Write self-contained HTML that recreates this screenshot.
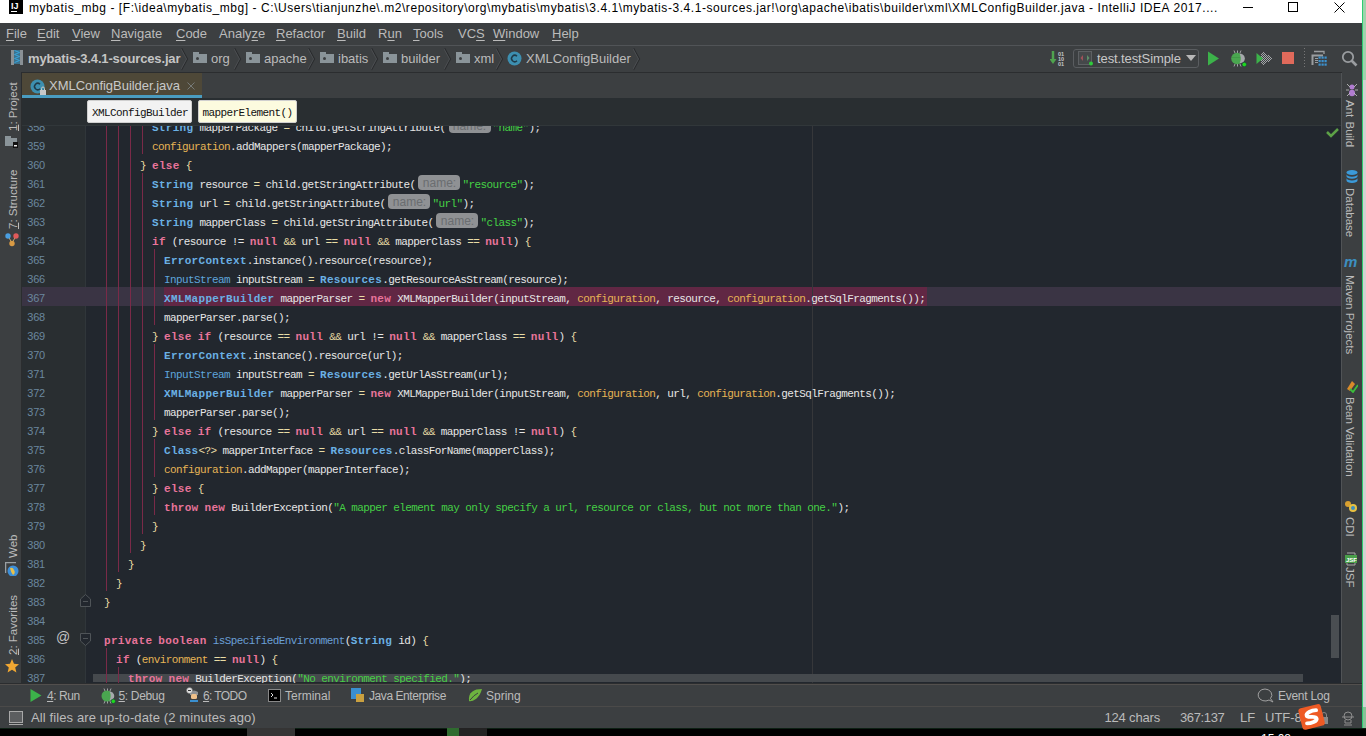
<!DOCTYPE html>
<html><head><meta charset="utf-8">
<style>
*{margin:0;padding:0;box-sizing:border-box}
html,body{width:1366px;height:736px;overflow:hidden;background:#22272e;font-family:"Liberation Sans",sans-serif}
.a{position:absolute}
#title{left:0;top:0;width:1362px;height:23px;background:#fff}
#title .t{position:absolute;left:29px;top:0px;font-size:12px;letter-spacing:0.56px;color:#000;white-space:nowrap;line-height:16px}
#menubar{left:0;top:23px;width:1362px;height:22px;background:#3c3f41}
.mi{position:absolute;top:3px;font-size:13px;color:#bbbbbb;line-height:16px;white-space:nowrap}
.mi u{text-decoration:underline;text-underline-offset:2px}
#sep1{left:0;top:45px;width:1362px;height:1px;background:#515457}
#navbar{left:0;top:46px;width:1362px;height:26px;background:#3c3f41}
#navline{left:0;top:72px;width:1362px;height:1px;background:#2b2d2f}
.nt{position:absolute;top:5px;font-size:13px;color:#bbbbbb;line-height:16px;white-space:nowrap}
#lstrip{left:0;top:72px;width:21px;height:611px;background:#3c3f41}
#lstripb{left:21px;top:72px;width:1px;height:611px;background:#2b2d2f}
#rstrip{left:1342px;top:72px;width:20px;height:611px;background:#3c3f41}
#rstripb{left:1341px;top:73px;width:1px;height:610px;background:#505356}
#tabbar{left:22px;top:73px;width:1319px;height:25px;background:#3c3f41}
#tab{left:22px;top:73px;width:180px;height:22px;background:#4e4838}
#tabul{left:22px;top:95px;width:180px;height:3px;background:#4a9cc0}
#header{left:22px;top:98px;width:1319px;height:28px;background:#292e31}
#headerline{left:22px;top:125px;width:1319px;height:1px;background:#31373a}
#gutter{left:22px;top:125px;width:64px;height:558px;background:#292e31}
#gutterline{left:85px;top:125px;width:1px;height:558px;background:#30363a}
#editor{left:86px;top:125px;width:1255px;height:558px;background:#22272e;overflow:hidden}
#curline{left:22px;top:287px;width:1319px;height:19px;background:#3a3444}
#sel{left:164px;top:287px;width:763px;height:19px;background:#612744}
#margin{left:812px;top:125px;width:1px;height:558px;background:#36373a}
.num{position:absolute;left:22px;width:23px;text-align:right;font-size:11px;line-height:19px;padding-top:2px;color:#6b879e;letter-spacing:-0.2px}
.g{position:absolute;width:1px;background:#7a2a48}
.ln{position:absolute;white-space:pre;padding-top:3px;font-family:"Liberation Mono",monospace;font-size:11px;line-height:19px;height:22px;color:#d6d6d6;letter-spacing:-0.6px}
.ln .k{color:#e8749a;font-weight:bold;letter-spacing:0.3px}
.ln .c{color:#6ab0e4;font-weight:bold;letter-spacing:0.3px}
.ln .C{color:#5ea5dc}
.ln .i{color:#e6e6e6}
.ln .f{color:#e6b455}
.ln .s{color:#45d045}
.ln .o{color:#e9dca5}
.ln .m{color:#6a9fd6}
.ln .h{display:inline-block;width:42px;height:15px;margin:0 2px 0 3px;vertical-align:baseline;position:relative;top:-1px;background:#8f9194;border-radius:4px;color:#6a6d70;font-family:"Liberation Sans",sans-serif;font-size:12px;line-height:17px;text-align:center;letter-spacing:0}
#hscroll{left:93px;top:674px;width:1210px;height:8px;background:#45494d}
#vscroll{left:1331px;top:615px;width:8px;height:43px;background:#4a4e52}
#edbottom{left:0;top:683px;width:1362px;height:2px;background:#524f4d;border-top:1px solid #2b2d2f}
#toolbar{left:0;top:685px;width:1362px;height:21px;background:#3c3f41}
#sep2{left:0;top:706px;width:1362px;height:1px;background:#4b4a49}
#status{left:0;top:707px;width:1362px;height:21px;background:#3c3f41}
#taskbar{left:0;top:728px;width:1366px;height:8px;background:#000;border-top:1px solid #0d2014}
.tb{position:absolute;font-size:12px;color:#bbbbbb;line-height:16px;white-space:nowrap}
.vt{position:absolute;transform-origin:0 0;transform:rotate(-90deg);font-size:11.5px;color:#bbbbbb;white-space:nowrap;line-height:14px}
.vtr{position:absolute;transform-origin:0 0;transform:rotate(90deg);font-size:11.5px;color:#bbbbbb;white-space:nowrap;line-height:14px}
#redge{left:1362px;top:0;width:4px;height:728px;background:#d2d2d2}
#redgeline{left:1362px;top:0;width:1px;height:728px;background:#2ecc71}
.pop{position:absolute;height:23px;border-radius:2px;border:1px solid #cfcfcf;padding-top:1.5px;font-family:"Liberation Mono",monospace;font-size:11px;letter-spacing:-0.6px;line-height:21px;color:#111;padding-left:4px;white-space:nowrap}
</style></head><body>
<div id="title" class="a">
  <div class="a" style="left:9px;top:0;width:14px;height:14px;background:#000"></div>
  <div class="a" style="left:11px;top:2px;font:bold 9px 'Liberation Sans',sans-serif;color:#fff;line-height:9px">IJ</div>
  <div class="a" style="left:11px;top:11px;width:6px;height:1px;background:#fff"></div>
  <div class="t">mybatis_mbg - [F:\idea\mybatis_mbg] - C:\Users\tianjunzhe\.m2\repository\org\mybatis\mybatis\3.4.1\mybatis-3.4.1-sources.jar!\org\apache\ibatis\builder\xml\XMLConfigBuilder.java - IntelliJ IDEA 2017....</div>
  <div class="a" style="left:1243px;top:7px;width:10px;height:1px;background:#000"></div>
  <div class="a" style="left:1288px;top:2px;width:10px;height:10px;border:1px solid #000"></div>
  <svg class="a" style="left:1334px;top:2px" width="11" height="11"><path d="M0.5 0.5L10.5 10.5M10.5 0.5L0.5 10.5" stroke="#000" stroke-width="1"/></svg>
</div>
<div id="menubar" class="a"><div class="mi" style="left:6px"><u>F</u>ile</div>
<div class="mi" style="left:37px"><u>E</u>dit</div>
<div class="mi" style="left:72px"><u>V</u>iew</div>
<div class="mi" style="left:111px"><u>N</u>avigate</div>
<div class="mi" style="left:176px"><u>C</u>ode</div>
<div class="mi" style="left:219px">Analy<u>z</u>e</div>
<div class="mi" style="left:276px"><u>R</u>efactor</div>
<div class="mi" style="left:337px"><u>B</u>uild</div>
<div class="mi" style="left:378px">R<u>u</u>n</div>
<div class="mi" style="left:413px"><u>T</u>ools</div>
<div class="mi" style="left:458px">VC<u>S</u></div>
<div class="mi" style="left:493px"><u>W</u>indow</div>
<div class="mi" style="left:552px"><u>H</u>elp</div></div>
<div id="sep1" class="a"></div>
<div id="navbar" class="a">
  <svg class="a" style="left:11px;top:4px" width="12" height="15"><rect x="0" y="0" width="3" height="15" fill="#8a9196"/><rect x="9" y="0" width="3" height="15" fill="#8a9196"/><path d="M3 1h6M3 3h6M3 5h6M3 7h6M3 9h6M3 11h6M3 13h6" stroke="#3aa6dc" stroke-width="1"/><path d="M3.5 0.5L8.5 2.5L3.5 4.5L8.5 6.5L3.5 8.5L8.5 10.5L3.5 12.5" stroke="#3aa6dc" fill="none" stroke-width="1"/></svg>
  <div class="nt" style="left:28px;font-weight:bold;letter-spacing:-0.15px;color:#c5c5c5">mybatis-3.4.1-sources.jar</div>
  <svg class="a" style="left:181px;top:2px" width="9" height="23"><path d="M0.5 0L6.5 11L0.5 22" stroke="#2a2c2e" stroke-width="1.2" fill="none"/><path d="M-0.5 0L5.5 11L-0.5 22" stroke="#4b4e51" stroke-width="1" fill="none"/></svg>
<svg class="a" style="left:193px;top:6px" width="14" height="11"><path d="M0 0H6V2H14V11H0Z" fill="#8a9499"/><circle cx="4.5" cy="6.5" r="1.5" fill="#3c3f41"/></svg>
<div class="nt" style="left:211px">org</div>
<svg class="a" style="left:246px;top:6px" width="14" height="11"><path d="M0 0H6V2H14V11H0Z" fill="#8a9499"/><circle cx="4.5" cy="6.5" r="1.5" fill="#3c3f41"/></svg>
<div class="nt" style="left:264px">apache</div>
<svg class="a" style="left:320px;top:6px" width="14" height="11"><path d="M0 0H6V2H14V11H0Z" fill="#8a9499"/><circle cx="4.5" cy="6.5" r="1.5" fill="#3c3f41"/></svg>
<div class="nt" style="left:338px">ibatis</div>
<svg class="a" style="left:383px;top:6px" width="14" height="11"><path d="M0 0H6V2H14V11H0Z" fill="#8a9499"/><circle cx="4.5" cy="6.5" r="1.5" fill="#3c3f41"/></svg>
<div class="nt" style="left:401px">builder</div>
<svg class="a" style="left:456px;top:6px" width="14" height="11"><path d="M0 0H6V2H14V11H0Z" fill="#8a9499"/><circle cx="4.5" cy="6.5" r="1.5" fill="#3c3f41"/></svg>
<div class="nt" style="left:474px">xml</div>
<svg class="a" style="left:234px;top:2px" width="9" height="23"><path d="M0.5 0L6.5 11L0.5 22" stroke="#2a2c2e" stroke-width="1.2" fill="none"/><path d="M-0.5 0L5.5 11L-0.5 22" stroke="#4b4e51" stroke-width="1" fill="none"/></svg>
<svg class="a" style="left:307.5px;top:2px" width="9" height="23"><path d="M0.5 0L6.5 11L0.5 22" stroke="#2a2c2e" stroke-width="1.2" fill="none"/><path d="M-0.5 0L5.5 11L-0.5 22" stroke="#4b4e51" stroke-width="1" fill="none"/></svg>
<svg class="a" style="left:371px;top:2px" width="9" height="23"><path d="M0.5 0L6.5 11L0.5 22" stroke="#2a2c2e" stroke-width="1.2" fill="none"/><path d="M-0.5 0L5.5 11L-0.5 22" stroke="#4b4e51" stroke-width="1" fill="none"/></svg>
<svg class="a" style="left:443.5px;top:2px" width="9" height="23"><path d="M0.5 0L6.5 11L0.5 22" stroke="#2a2c2e" stroke-width="1.2" fill="none"/><path d="M-0.5 0L5.5 11L-0.5 22" stroke="#4b4e51" stroke-width="1" fill="none"/></svg>
<svg class="a" style="left:495.5px;top:2px" width="9" height="23"><path d="M0.5 0L6.5 11L0.5 22" stroke="#2a2c2e" stroke-width="1.2" fill="none"/><path d="M-0.5 0L5.5 11L-0.5 22" stroke="#4b4e51" stroke-width="1" fill="none"/></svg>
<svg class="a" style="left:632.5px;top:2px" width="9" height="23"><path d="M0.5 0L6.5 11L0.5 22" stroke="#2a2c2e" stroke-width="1.2" fill="none"/><path d="M-0.5 0L5.5 11L-0.5 22" stroke="#4b4e51" stroke-width="1" fill="none"/></svg>
<svg class="a" style="left:507px;top:5px" width="16" height="16"><circle cx="7.5" cy="7.5" r="7" fill="#3d8fb0"/><path d="M10 5.2A3.2 3.2 0 1 0 10 9.8" stroke="#1f3a48" stroke-width="1.5" fill="none"/></svg>
<div class="nt" style="left:526px">XMLConfigBuilder</div>
</div>
<div id="navline" class="a"></div>
<div id="lstrip" class="a"></div><div id="lstripb" class="a"></div>
<div id="rstrip" class="a"></div><div id="rstripb" class="a"></div>
<div id="tabbar" class="a"></div>
<div id="tab" class="a"></div>
<div id="tabul" class="a"></div>
<div id="gutter" class="a"></div>
<div id="gutterline" class="a"></div>
<div id="editor" class="a"></div>
<div id="curline" class="a"></div>
<div id="sel" class="a"></div>
<div id="margin" class="a"></div>
<div id="hscroll" class="a"></div>
<div class="num" style="top:116px">358</div>
<div class="num" style="top:135px">359</div>
<div class="num" style="top:154px">360</div>
<div class="num" style="top:173px">361</div>
<div class="num" style="top:192px">362</div>
<div class="num" style="top:211px">363</div>
<div class="num" style="top:230px">364</div>
<div class="num" style="top:249px">365</div>
<div class="num" style="top:268px">366</div>
<div class="num" style="top:287px">367</div>
<div class="num" style="top:306px">368</div>
<div class="num" style="top:325px">369</div>
<div class="num" style="top:344px">370</div>
<div class="num" style="top:363px">371</div>
<div class="num" style="top:382px">372</div>
<div class="num" style="top:401px">373</div>
<div class="num" style="top:420px">374</div>
<div class="num" style="top:439px">375</div>
<div class="num" style="top:458px">376</div>
<div class="num" style="top:477px">377</div>
<div class="num" style="top:496px">378</div>
<div class="num" style="top:515px">379</div>
<div class="num" style="top:534px">380</div>
<div class="num" style="top:553px">381</div>
<div class="num" style="top:572px">382</div>
<div class="num" style="top:591px">383</div>
<div class="num" style="top:610px">384</div>
<div class="num" style="top:629px">385</div>
<div class="num" style="top:648px">386</div>
<div class="num" style="top:667px">387</div>
<div class="g" style="left:106px;top:125px;height:466px"></div>
<div class="g" style="left:118px;top:125px;height:447px"></div>
<div class="g" style="left:130px;top:125px;height:428px"></div>
<div class="g" style="left:142px;top:125px;height:29px"></div>
<div class="g" style="left:142px;top:173px;height:361px"></div>
<div class="g" style="left:154px;top:249px;height:76px"></div>
<div class="g" style="left:154px;top:344px;height:76px"></div>
<div class="g" style="left:154px;top:439px;height:38px"></div>
<div class="g" style="left:154px;top:496px;height:19px"></div>
<div class="g" style="left:106px;top:648px;height:35px"></div>
<div class="g" style="left:118px;top:667px;height:16px"></div>
<div class="ln" style="left:152px;top:116px"><span class="c">String</span><span class="i"> mapperPackage </span><span class="o">=</span><span class="i"> child.getStringAttribute(</span><span class="h">name:</span><span class="s">&quot;name&quot;</span><span class="i">);</span></div>
<div class="ln" style="left:152px;top:135px"><span class="f">configuration</span><span class="i">.addMappers(mapperPackage);</span></div>
<div class="ln" style="left:140px;top:154px"><span class="o">}</span><span class="i"> </span><span class="k">else</span><span class="i"> </span><span class="o">{</span></div>
<div class="ln" style="left:152px;top:173px"><span class="c">String</span><span class="i"> resource </span><span class="o">=</span><span class="i"> child.getStringAttribute(</span><span class="h">name:</span><span class="s">&quot;resource&quot;</span><span class="i">);</span></div>
<div class="ln" style="left:152px;top:192px"><span class="c">String</span><span class="i"> url </span><span class="o">=</span><span class="i"> child.getStringAttribute(</span><span class="h">name:</span><span class="s">&quot;url&quot;</span><span class="i">);</span></div>
<div class="ln" style="left:152px;top:211px"><span class="c">String</span><span class="i"> mapperClass </span><span class="o">=</span><span class="i"> child.getStringAttribute(</span><span class="h">name:</span><span class="s">&quot;class&quot;</span><span class="i">);</span></div>
<div class="ln" style="left:152px;top:230px"><span class="k">if</span><span class="i"> (resource != </span><span class="k">null</span><span class="i"> </span><span class="o">&amp;&amp;</span><span class="i"> url </span><span class="o">==</span><span class="i"> </span><span class="k">null</span><span class="i"> </span><span class="o">&amp;&amp;</span><span class="i"> mapperClass </span><span class="o">==</span><span class="i"> </span><span class="k">null</span><span class="i">) </span><span class="o">{</span></div>
<div class="ln" style="left:164px;top:249px"><span class="c">ErrorContext</span><span class="i">.instance().resource(resource);</span></div>
<div class="ln" style="left:164px;top:268px"><span class="C">InputStream</span><span class="i"> inputStream </span><span class="o">=</span><span class="i"> </span><span class="c">Resources</span><span class="i">.getResourceAsStream(resource);</span></div>
<div class="ln" style="left:164px;top:287px"><span class="c">XMLMapperBuilder</span><span class="i"> mapperParser </span><span class="o">=</span><span class="i"> </span><span class="k">new</span><span class="i"> XMLMapperBuilder(inputStream, </span><span class="f">configuration</span><span class="i">, resource, </span><span class="f">configuration</span><span class="i">.getSqlFragments());</span></div>
<div class="ln" style="left:164px;top:306px"><span class="i">mapperParser.parse();</span></div>
<div class="ln" style="left:152px;top:325px"><span class="o">}</span><span class="i"> </span><span class="k">else</span><span class="i"> </span><span class="k">if</span><span class="i"> (resource </span><span class="o">==</span><span class="i"> </span><span class="k">null</span><span class="i"> </span><span class="o">&amp;&amp;</span><span class="i"> url != </span><span class="k">null</span><span class="i"> </span><span class="o">&amp;&amp;</span><span class="i"> mapperClass </span><span class="o">==</span><span class="i"> </span><span class="k">null</span><span class="i">) </span><span class="o">{</span></div>
<div class="ln" style="left:164px;top:344px"><span class="c">ErrorContext</span><span class="i">.instance().resource(url);</span></div>
<div class="ln" style="left:164px;top:363px"><span class="C">InputStream</span><span class="i"> inputStream </span><span class="o">=</span><span class="i"> </span><span class="c">Resources</span><span class="i">.getUrlAsStream(url);</span></div>
<div class="ln" style="left:164px;top:382px"><span class="c">XMLMapperBuilder</span><span class="i"> mapperParser </span><span class="o">=</span><span class="i"> </span><span class="k">new</span><span class="i"> XMLMapperBuilder(inputStream, </span><span class="f">configuration</span><span class="i">, url, </span><span class="f">configuration</span><span class="i">.getSqlFragments());</span></div>
<div class="ln" style="left:164px;top:401px"><span class="i">mapperParser.parse();</span></div>
<div class="ln" style="left:152px;top:420px"><span class="o">}</span><span class="i"> </span><span class="k">else</span><span class="i"> </span><span class="k">if</span><span class="i"> (resource </span><span class="o">==</span><span class="i"> </span><span class="k">null</span><span class="i"> </span><span class="o">&amp;&amp;</span><span class="i"> url </span><span class="o">==</span><span class="i"> </span><span class="k">null</span><span class="i"> </span><span class="o">&amp;&amp;</span><span class="i"> mapperClass != </span><span class="k">null</span><span class="i">) </span><span class="o">{</span></div>
<div class="ln" style="left:164px;top:439px"><span class="c">Class</span><span class="o">&lt;?&gt;</span><span class="i"> mapperInterface </span><span class="o">=</span><span class="i"> </span><span class="c">Resources</span><span class="i">.classForName(mapperClass);</span></div>
<div class="ln" style="left:164px;top:458px"><span class="f">configuration</span><span class="i">.addMapper(mapperInterface);</span></div>
<div class="ln" style="left:152px;top:477px"><span class="o">}</span><span class="i"> </span><span class="k">else</span><span class="i"> </span><span class="o">{</span></div>
<div class="ln" style="left:164px;top:496px"><span class="k">throw</span><span class="i"> </span><span class="k">new</span><span class="i"> BuilderException(</span><span class="s">&quot;A mapper element may only specify a url, resource or class, but not more than one.&quot;</span><span class="i">);</span></div>
<div class="ln" style="left:152px;top:515px"><span class="o">}</span></div>
<div class="ln" style="left:140px;top:534px"><span class="o">}</span></div>
<div class="ln" style="left:128px;top:553px"><span class="o">}</span></div>
<div class="ln" style="left:116px;top:572px"><span class="o">}</span></div>
<div class="ln" style="left:104px;top:591px"><span class="o">}</span></div>
<div class="ln" style="left:104px;top:629px"><span class="k">private</span><span class="i"> </span><span class="k">boolean</span><span class="i"> </span><span class="m">isSpecifiedEnvironment</span><span class="i">(</span><span class="c">String</span><span class="i"> id) </span><span class="o">{</span></div>
<div class="ln" style="left:116px;top:648px"><span class="k">if</span><span class="i"> (</span><span class="f">environment</span><span class="i"> </span><span class="o">==</span><span class="i"> </span><span class="k">null</span><span class="i">) </span><span class="o">{</span></div>
<div class="ln" style="left:128px;top:667px"><span class="k">throw</span><span class="i"> </span><span class="k">new</span><span class="i"> BuilderException(</span><span class="s">&quot;No environment specified.&quot;</span><span class="i">);</span></div>
<div id="header" class="a"></div>
<div id="headerline" class="a"></div>

<div class="pop" style="left:87px;top:100px;width:105px;background:#f2f2f2">XMLConfigBuilder</div>
<div class="pop" style="left:197.5px;top:100px;width:99.5px;background:#fcfbdf">mapperElement()</div>

<svg class="a" style="left:30px;top:79px" width="17" height="16"><circle cx="7.5" cy="7.5" r="7" fill="#3d8fb0"/><path d="M10 5.2A3.2 3.2 0 1 0 10 9.8" stroke="#1f3a48" stroke-width="1.5" fill="none"/><rect x="10" y="11" width="6" height="5" fill="#c8c8c8"/><path d="M11.5 11V9.5A1.5 1.5 0 0 1 14.5 9.5V11" stroke="#c8c8c8" fill="none"/></svg>
<div class="a" style="left:49px;top:78px;font-size:13px;line-height:16px;color:#c8c8c8;white-space:nowrap;letter-spacing:-0.03px">XMLConfigBuilder.java</div>
<svg class="a" style="left:187px;top:82px" width="8" height="8"><path d="M0.5 0.5L7.5 7.5M7.5 0.5L0.5 7.5" stroke="#7b8080" stroke-width="0.9"/></svg>

<svg class="a" style="left:1050px;top:51px" width="17" height="16"><path d="M3 0V9" stroke="#4fa34f" stroke-width="2.5"/><path d="M-0.5 8L3 13L6.5 8Z" fill="#4fa34f"/><text x="8" y="5" font-size="5.5" fill="#c8c8c8" font-family="Liberation Sans" font-weight="bold">01</text><text x="8" y="10" font-size="5.5" fill="#c8c8c8" font-family="Liberation Sans" font-weight="bold">10</text><text x="8" y="15" font-size="5.5" fill="#c8c8c8" font-family="Liberation Sans" font-weight="bold">01</text></svg>
<div class="a" style="left:1073px;top:49px;width:126px;height:19px;border:1px solid #5a5d60;border-radius:3px;background:#3c3f41"></div>
<svg class="a" style="left:1078px;top:51px" width="16" height="15"><rect x="0.5" y="0.5" width="13" height="13" fill="#45484a" stroke="#5d6063"/><path d="M5 4L2.5 7L5 10Z" fill="#a0525a"/><path d="M9 4L11.5 7L9 10Z" fill="#5e8e6a"/><circle cx="13" cy="12.5" r="2" fill="#2fcc3b"/></svg>
<div class="a" style="left:1097px;top:51px;font-size:13px;line-height:16px;color:#c8c8c8;white-space:nowrap;letter-spacing:-0.1px">test.testSimple</div>
<svg class="a" style="left:1186px;top:55px" width="10" height="6"><path d="M0 0H10L5 6Z" fill="#b8b8b8"/></svg>
<svg class="a" style="left:1207px;top:51px" width="13" height="15"><path d="M1 0.5L12 7.5L1 14.5Z" fill="#3cb24a"/></svg>
<svg class="a" style="left:1230px;top:50px" width="17" height="17"><path d="M4 0.5L5 3M7.5 0.5V3M11 0.5L10 3M4 16.5L5 14M7.5 16.5V14M11 16.5L10 14" stroke="#a0a3a6" stroke-width="1"/><ellipse cx="7" cy="8.5" rx="5.8" ry="5.8" fill="#4aa650"/><path d="M2 7.5H12" stroke="#3f9645" stroke-width="0.8"/><path d="M9.5 3.5A4.8 5 0 0 1 9.5 13.5Q12 8.5 9.5 3.5Z" fill="#a6a9ac"/><path d="M12 5A4 4 0 0 1 12 12" stroke="#a6a9ac" stroke-width="1.6" fill="none"/><circle cx="14.3" cy="14.5" r="2.3" fill="#1ed81e" stroke="#234" stroke-width="0.6"/></svg>
<svg class="a" style="left:1256px;top:51px" width="16" height="15"><rect x="7" y="1" width="1" height="1" fill="#a4a7aa"/><rect x="6" y="2" width="1" height="1" fill="#a4a7aa"/><rect x="8" y="2" width="1" height="1" fill="#a4a7aa"/><rect x="5" y="3" width="1" height="1" fill="#a4a7aa"/><rect x="7" y="3" width="1" height="1" fill="#a4a7aa"/><rect x="9" y="3" width="1" height="1" fill="#a4a7aa"/><rect x="6" y="4" width="1" height="1" fill="#a4a7aa"/><rect x="8" y="4" width="1" height="1" fill="#a4a7aa"/><rect x="10" y="4" width="1" height="1" fill="#a4a7aa"/><rect x="12" y="4" width="1" height="1" fill="#a4a7aa"/><rect x="5" y="5" width="1" height="1" fill="#a4a7aa"/><rect x="7" y="5" width="1" height="1" fill="#a4a7aa"/><rect x="9" y="5" width="1" height="1" fill="#a4a7aa"/><rect x="11" y="5" width="1" height="1" fill="#a4a7aa"/><rect x="13" y="5" width="1" height="1" fill="#a4a7aa"/><rect x="4" y="6" width="1" height="1" fill="#a4a7aa"/><rect x="6" y="6" width="1" height="1" fill="#a4a7aa"/><rect x="8" y="6" width="1" height="1" fill="#a4a7aa"/><rect x="10" y="6" width="1" height="1" fill="#a4a7aa"/><rect x="12" y="6" width="1" height="1" fill="#a4a7aa"/><rect x="14" y="6" width="1" height="1" fill="#a4a7aa"/><rect x="3" y="7" width="1" height="1" fill="#a4a7aa"/><rect x="5" y="7" width="1" height="1" fill="#a4a7aa"/><rect x="7" y="7" width="1" height="1" fill="#a4a7aa"/><rect x="9" y="7" width="1" height="1" fill="#a4a7aa"/><rect x="11" y="7" width="1" height="1" fill="#a4a7aa"/><rect x="13" y="7" width="1" height="1" fill="#a4a7aa"/><rect x="15" y="7" width="1" height="1" fill="#a4a7aa"/><rect x="4" y="8" width="1" height="1" fill="#a4a7aa"/><rect x="6" y="8" width="1" height="1" fill="#a4a7aa"/><rect x="8" y="8" width="1" height="1" fill="#a4a7aa"/><rect x="10" y="8" width="1" height="1" fill="#a4a7aa"/><rect x="12" y="8" width="1" height="1" fill="#a4a7aa"/><rect x="14" y="8" width="1" height="1" fill="#a4a7aa"/><rect x="5" y="9" width="1" height="1" fill="#a4a7aa"/><rect x="7" y="9" width="1" height="1" fill="#a4a7aa"/><rect x="9" y="9" width="1" height="1" fill="#a4a7aa"/><rect x="11" y="9" width="1" height="1" fill="#a4a7aa"/><rect x="13" y="9" width="1" height="1" fill="#a4a7aa"/><rect x="6" y="10" width="1" height="1" fill="#a4a7aa"/><rect x="8" y="10" width="1" height="1" fill="#a4a7aa"/><rect x="10" y="10" width="1" height="1" fill="#a4a7aa"/><rect x="12" y="10" width="1" height="1" fill="#a4a7aa"/><rect x="5" y="11" width="1" height="1" fill="#a4a7aa"/><rect x="7" y="11" width="1" height="1" fill="#a4a7aa"/><rect x="9" y="11" width="1" height="1" fill="#a4a7aa"/><rect x="6" y="12" width="1" height="1" fill="#a4a7aa"/><rect x="8" y="12" width="1" height="1" fill="#a4a7aa"/><rect x="7" y="13" width="1" height="1" fill="#a4a7aa"/><path d="M0.5 2L7 7.5L0.5 13Z" fill="#3cb24a"/></svg>
<div class="a" style="left:1282px;top:52px;width:12px;height:12px;background:#e06a5b"></div>
<svg class="a" style="left:1304px;top:48px" width="1" height="20"><path d="M0.5 0V20" stroke="#777" stroke-dasharray="1,2"/></svg>
<svg class="a" style="left:1311px;top:50px" width="17" height="17"><path d="M3 1.5H13V4" stroke="#9a9da0" stroke-width="1.3" fill="none"/><path d="M1.5 15V5.5H12" stroke="#9a9da0" stroke-width="2" fill="none"/><path d="M4 8.5H7M4 10.5H7M4 12.5H7" stroke="#9a9da0"/><rect x="7.5" y="6.5" width="2.2" height="2.2" fill="#3b92d0"/><rect x="10.5" y="6.5" width="2.2" height="2.2" fill="#3b92d0"/><rect x="13.5" y="6.5" width="2.2" height="2.2" fill="#3b92d0"/><rect x="7.5" y="10" width="2.2" height="2.2" fill="#3b92d0"/><rect x="10.5" y="10" width="2.2" height="2.2" fill="#3b92d0"/><rect x="13.5" y="10" width="2.2" height="2.2" fill="#3b92d0"/><rect x="7.5" y="13.5" width="2.2" height="2.2" fill="#3b92d0"/><rect x="10.5" y="13.5" width="2.2" height="2.2" fill="#3b92d0"/><rect x="13.5" y="13.5" width="2.2" height="2.2" fill="#3b92d0"/></svg>
<svg class="a" style="left:1341px;top:50px" width="17" height="17"><circle cx="7" cy="7" r="5.2" fill="none" stroke="#9a9da0" stroke-width="1.8"/><path d="M10.5 10.5L15.5 15.5" stroke="#9a9da0" stroke-width="2.6"/></svg>

<div class="a" style="left:56px;top:629px;font-size:14px;line-height:16px;color:#c4c4c4">@</div>
<svg class="a" style="left:80px;top:633px" width="11" height="13"><path d="M0.5 0.5H10.5V8L5.5 12.5L0.5 8Z" fill="#22272e" stroke="#4f5458"/><path d="M3 5.5H8" stroke="#4f5458"/></svg>
<svg class="a" style="left:80px;top:594px" width="11" height="13"><path d="M0.5 12.5H10.5V5L5.5 0.5L0.5 5Z" fill="#22272e" stroke="#4f5458"/><path d="M3 7.5H8" stroke="#4f5458"/></svg>
<svg class="a" style="left:1326px;top:127px" width="13" height="11"><path d="M1 5L5 9L12 2" stroke="#5da147" stroke-width="2.5" fill="none"/></svg>

<div id="vscroll" class="a"></div>
<div id="edbottom" class="a"></div>
<div id="toolbar" class="a"></div>
<div id="sep2" class="a"></div>
<div id="status" class="a"></div>
<div id="taskbar" class="a"></div>
<div id="redge" class="a"></div><div class="a" style="left:1363px;top:0;width:3px;height:80px;background:#9fd3ad"></div><div class="a" style="left:1363px;top:707px;width:3px;height:21px;background:#86c197"></div><div id="redgeline" class="a"></div>

<div class="vt" style="left:5.5px;top:131px"><u>1</u>: Project</div>
<svg class="a" style="left:5px;top:136px" width="13" height="12"><path d="M0 0H6V2H12V10H0Z" fill="#8a9499"/><rect x="8" y="6" width="5" height="6" fill="#111"/><rect x="9" y="9" width="3" height="1.5" fill="#eee"/></svg>
<div class="vt" style="left:5.5px;top:229px"><u>7</u>: Structure</div>
<svg class="a" style="left:5px;top:233px" width="14" height="14"><path d="M3 3L7 10L11 3" stroke="#c7a66a" fill="none"/><circle cx="3" cy="3" r="2.7" fill="#4a9ee0"/><circle cx="11" cy="3" r="2.7" fill="#e05a5a"/><circle cx="7" cy="10.5" r="2.7" fill="#d99a44"/></svg>
<div class="vt" style="left:5.5px;top:558px">Web</div>
<svg class="a" style="left:5px;top:562px" width="14" height="14"><path d="M0.5 11V0.5H11" stroke="#9aa0a4" fill="none" stroke-width="1.5"/><circle cx="8" cy="9" r="5.5" fill="#3d8fd8"/><path d="M5 6Q8 5 9 8Q11 11 8 13Q6 11 5 6Z" fill="#e8c04a"/></svg>
<div class="vt" style="left:5.5px;top:655px"><u>2</u>: Favorites</div>
<svg class="a" style="left:4.5px;top:659px" width="14" height="14"><path d="M7 0L9 4.8L14 5.2L10.2 8.5L11.4 13.5L7 10.8L2.6 13.5L3.8 8.5L0 5.2L5 4.8Z" fill="#f0a732"/></svg>

<svg class="a" style="left:1346px;top:83px" width="12" height="14"><ellipse cx="6" cy="4" rx="2.5" ry="2.5" fill="#b07cd0"/><ellipse cx="6" cy="10" rx="3" ry="3.3" fill="#b07cd0"/><path d="M1 1L4 4M11 1L8 4M0 7H3M9 7H12M1 13L4 10M11 13L8 10" stroke="#c8c8c8" stroke-width="0.8"/></svg>
<div class="vtr" style="left:1357px;top:99.5px;word-spacing:1px">Ant Build</div>
<svg class="a" style="left:1346px;top:170px" width="12" height="13"><ellipse cx="6" cy="2.5" rx="5.5" ry="2.5" fill="#3b9ad9"/><path d="M0.5 4.2V6.2A5.5 2.5 0 0 0 11.5 6.2V4.2A5.5 2.5 0 0 1 0.5 4.2Z" fill="#3b9ad9"/><path d="M0.5 8V10.5A5.5 2.5 0 0 0 11.5 10.5V8A5.5 2.5 0 0 1 0.5 8Z" fill="#3b9ad9"/></svg>
<div class="vtr" style="left:1357px;top:188px">Database</div>
<div class="a" style="left:1344px;top:254px;font:italic bold 15px 'Liberation Sans',sans-serif;color:#3d8fc0;line-height:16px">m</div>
<div class="vtr" style="left:1357px;top:275px">Maven Projects</div>
<svg class="a" style="left:1345px;top:380px" width="13" height="13"><path d="M2 9L7 1L10 4L5 11Z" fill="#d98a2a"/><path d="M5 9L8 12L13 5" stroke="#3cbf3c" stroke-width="1.8" fill="none"/></svg>
<div class="vtr" style="left:1357px;top:397px">Bean Validation</div>
<svg class="a" style="left:1344px;top:500px" width="14" height="13"><circle cx="4" cy="4" r="3" fill="#d9a030"/><circle cx="9" cy="8" r="4" fill="#e8c040"/><circle cx="9" cy="8" r="2" fill="#3d8fc0"/></svg>
<div class="vtr" style="left:1357px;top:517px">CDI</div>
<svg class="a" style="left:1345px;top:552px" width="12" height="14"><rect x="0" y="3" width="12" height="8" fill="#4aa04a"/><text x="1" y="10" font-size="6" font-family="Liberation Sans" font-weight="bold" fill="#fff">JSF</text><path d="M2 1H10V3M2 11V13H10V11" stroke="#aaa" fill="none"/></svg>
<div class="vtr" style="left:1357px;top:567px">JSF</div>

<svg class="a" style="left:30px;top:689px" width="12" height="13"><path d="M0.5 0L11.5 6.5L0.5 13Z" fill="#3cb24a"/></svg>
<div class="tb" style="left:47px;top:688px;letter-spacing:-0.44px"><u>4</u>: Run</div>
<svg class="a" style="left:100px;top:688px" width="16" height="16"><path d="M4 0.5L5 3M7.5 0.5V3M11 0.5L10 3M4 15.5L5 13M7.5 15.5V13M11 15.5L10 13" stroke="#a0a3a6" stroke-width="1"/><ellipse cx="7" cy="8" rx="5.5" ry="5.5" fill="#4aa650"/><path d="M9.5 3.3A4.6 4.8 0 0 1 9.5 12.8Q11.8 8 9.5 3.3Z" fill="#a6a9ac"/><path d="M11.8 4.8A3.8 3.8 0 0 1 11.8 11.2" stroke="#a6a9ac" stroke-width="1.5" fill="none"/><circle cx="13.3" cy="13.3" r="2.2" fill="#1ed81e" stroke="#234" stroke-width="0.6"/></svg>
<div class="tb" style="left:118.5px;top:688px;letter-spacing:-0.34px"><u>5</u>: Debug</div>
<svg class="a" style="left:186px;top:687px" width="14" height="16"><path d="M4 5Q8 2 12 5V8H4Z" fill="#8c8f92"/><rect x="5" y="7" width="6" height="5" rx="1.5" fill="#efc08a"/><path d="M4 13H12V15H4Z" fill="#3a8fd0"/><circle cx="3.5" cy="3.5" r="3" fill="#e0e0e0" stroke="#666" stroke-width="0.5"/><path d="M2 3.5H5" stroke="#333"/></svg>
<div class="tb" style="left:203px;top:688px;letter-spacing:-0.6px"><u>6</u>: TODO</div>
<svg class="a" style="left:268px;top:689px" width="13" height="13"><rect x="0.5" y="0.5" width="12" height="12" fill="#000" stroke="#888"/><path d="M3 4L5 6L3 8M6 9H9" stroke="#ddd" fill="none"/></svg>
<div class="tb" style="left:285px;top:688px">Terminal</div>
<svg class="a" style="left:351px;top:688px" width="13" height="14"><rect x="0" y="0" width="10" height="11" fill="#3a8fd0"/><rect x="5" y="6" width="8" height="8" fill="#c9a040"/></svg>
<div class="tb" style="left:369px;top:688px;letter-spacing:-0.43px">Java Enterprise</div>
<svg class="a" style="left:468px;top:689px" width="15" height="13"><path d="M14 0C6 0 0 3 1 12C3 13 11 11 14 0Z" fill="#6db33f"/><path d="M2 11Q6 6 10 4" stroke="#3c3f41" fill="none"/></svg>
<div class="tb" style="left:486px;top:688px">Spring</div>

<svg class="a" style="left:1257px;top:688px" width="17" height="15"><path d="M8 1A7 6 0 1 0 12 12L16 14L13.5 10.5A7 6 0 0 0 8 1Z" fill="none" stroke="#a0a0a0" stroke-width="1"/></svg>
<div class="tb" style="left:1278px;top:688px;letter-spacing:-0.27px">Event Log</div>

<svg class="a" style="left:8px;top:711px" width="16" height="14"><rect x="1.5" y="0.5" width="13" height="11" fill="#5c5e60" stroke="#a8a8a8"/><path d="M1 13.5H15" stroke="#a8a8a8"/></svg>
<div class="tb" style="left:31px;top:710px;font-size:13px;letter-spacing:0.11px">All files are up-to-date (2 minutes ago)</div>
<div class="tb" style="left:1104.5px;top:710px;font-size:13px;letter-spacing:-0.18px">124 chars</div>
<div class="tb" style="left:1180px;top:710px;font-size:13px;letter-spacing:-0.36px">367:137</div>
<div class="tb" style="left:1240px;top:710px;font-size:13px">LF</div>
<div class="tb" style="left:1265px;top:710px;font-size:13px">UTF-8</div>
<svg class="a" style="left:1319px;top:712px" width="10" height="12"><rect x="1" y="5" width="8" height="7" fill="#888"/><path d="M2.5 5V3A2.5 2.5 0 0 1 7.5 3V5" stroke="#888" fill="none"/></svg>
<svg class="a" style="left:1341px;top:711px" width="14" height="15"><circle cx="7" cy="5" r="4" fill="none" stroke="#909090"/><path d="M1 6H13M3 14H11M4 9V12H10V9" stroke="#909090" fill="none"/></svg>
<svg class="a" style="left:1297px;top:702px" width="29" height="29"><g transform="rotate(-14 14.5 14.5)"><rect x="3" y="4" width="23" height="22" rx="3" fill="#ee5a24"/><path d="M20.5 9.5C16 8.5 9.5 9.5 10 12.8C10.5 15.5 19 14 19 17.8C19 20.5 12.5 21 8.5 20" stroke="#fff" stroke-width="3.8" fill="none" stroke-linecap="round"/></g></svg>
<div class="a" style="left:1261px;top:731.5px;font-size:12px;line-height:14px;color:#fff">15:08</div>
<div class="a" style="left:247px;top:728px;width:48px;height:8px;background:#353535"></div><div class="a" style="left:447px;top:728px;width:12px;height:8px;background:#2f6b2f"></div><div class="a" style="left:459px;top:728px;width:28px;height:8px;background:#232323"></div>

</body></html>
